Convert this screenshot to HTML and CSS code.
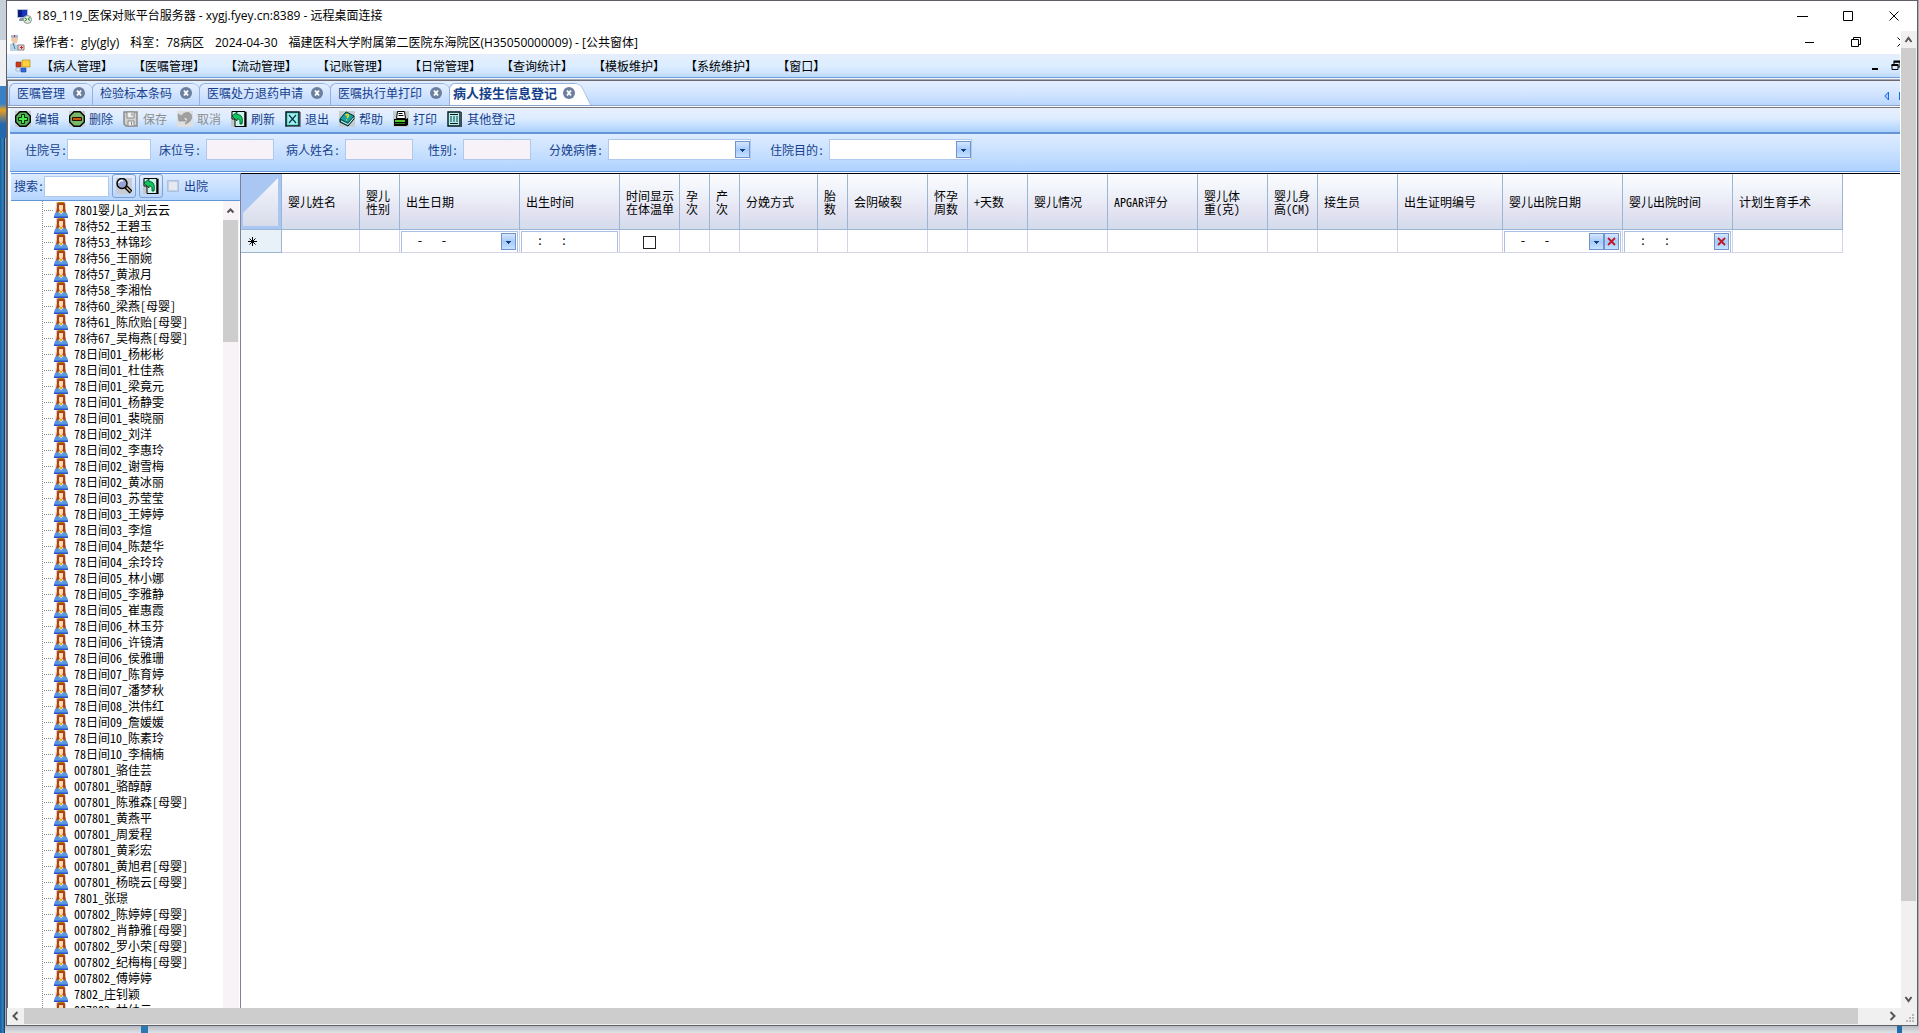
FILE: index.html
```html
<!DOCTYPE html>
<html lang="zh-CN">
<head>
<meta charset="utf-8">
<title>189_119_医保对账平台服务器 - 远程桌面连接</title>
<link rel="stylesheet" href="styles.css">
</head>
<body>
<svg class="sprite" aria-hidden="true">
  <symbol id="person" viewBox="0 0 14 16">
    <path d="M2 0h9l1 3v8H1l1-8z" fill="#d9d2c4"/>
    <path d="M4 0h6l1 2v4l1 5h-2L9 9H5l-1 2H2l1-5V2z" fill="#b0420f"/>
    <path d="M4 0h6v1H4z" fill="#b8860f"/>
    <path d="M5 3h4v4L8 9H6L5 7z" fill="#ffdcb4"/>
    <path d="M6 9h2v2H6z" fill="#e8b400"/>
    <path d="M0 14l1-3 3-1 3 2 3-2 3 1 1 3v2H0z" fill="#5b98e0"/>
    <path d="M0 14.500h14V16H0z" fill="#2a52c8"/>
  </symbol>
  <symbol id="tabx" viewBox="0 0 12 12">
    <circle cx="6" cy="6" r="6" fill="#6b7f9f"/>
    <path d="M4 3.500l4 5M8 3.500l-4 5" stroke="#fff" stroke-width="2"/>
  </symbol>
  <symbol id="arrow" viewBox="0 0 13 15">
    <path d="M4 7h5v1H8v1H7v1H6V9H5V8H4z" fill="#0f3c82"/>
  </symbol>
  <symbol id="redx" viewBox="0 0 13 15">
    <path d="M3 4l7 7M10 4l-7 7" stroke="#c01820" stroke-width="1.800"/>
  </symbol>
  <symbol id="refresh" viewBox="0 0 16 16">
    <path d="M0 0h16v16H0z" fill="#c4c8c8"/>
    <path d="M1 .500h13v15H4V8H1z" fill="#c8f4ec" stroke="#000"/>
    <path d="M14.500 1v15" stroke="#000" stroke-width="2"/>
    <path d="M1 5l5-4v2.500c5 0 6 4 5 9.500H9c0-4 0-5-3-5V10z" fill="#10c860" stroke="#003818" stroke-width=".8"/>
  </symbol>
</svg>

<div class="desktop">
<main class="window">
  <header class="titlebar">
    <svg class="ic" viewBox="0 0 16 16"><path d="M1 1h11v9H1z" fill="#b8c4d4"/><path d="M2 2h9v7H2z" fill="#1836c0"/><path d="M2 2h4v7H2z" fill="#0a1c80"/><path d="M4 10h5v1H4zM3 11h7v2H3z" fill="#8898a8"/><circle cx="11.500" cy="11.500" r="4" fill="#e4e8e4" stroke="#8a9a8a"/><path d="M9 10l2 1.500L9 13M14 9.500l-2 1.500 2 1.500" stroke="#18962c" fill="none"/></svg>
    <h1>189_119_医保对账平台服务器 - xygj.fyey.cn:8389 - 远程桌面连接</h1>
    <div class="controls">
      <button aria-label="最小化"><svg viewBox="0 0 11 11"><path d="M0 5.500h11" stroke="#000"/></svg></button>
      <button aria-label="最大化"><svg viewBox="0 0 11 11"><path d="M.500 .500h9v9h-9z" fill="none" stroke="#000"/></svg></button>
      <button aria-label="关闭"><svg viewBox="0 0 11 11"><path d="M.500 .500l9 9M9.500 .500l-9 9" stroke="#000"/></svg></button>
    </div>
  </header>

  <div class="viewport">
    <div class="session">
      <div class="apptitle">
        <svg class="ic" viewBox="0 0 16 16"><path d="M3 1h5l1 3-1 4H4L2 5z" fill="#f0c8a8"/><path d="M2 0h7v3H2z" fill="#a8bcd0"/><path d="M5 0h1v2H5z" fill="#d02020"/><path d="M1 9l4-1 4 2v6H1z" fill="#b8d4e8"/><path d="M4 8l2 6" stroke="#5a7890"/><path d="M9 10h6v5H9z" fill="#e8e4e4" stroke="#907878"/><path d="M11 12.500h3M12.500 11v3" stroke="#d02020"/></svg>
        <h2><span>操作者：gly(gly)</span><span>科室：78病区</span><span>2024-04-30</span><span>福建医科大学附属第二医院东海院区(H35050000009) - [公共窗体]</span></h2>
        <div class="controls">
          <button aria-label="最小化窗体"><svg viewBox="0 0 11 11"><path d="M0 5.500h9" stroke="#000"/></svg></button>
          <button aria-label="还原窗体"><svg viewBox="0 0 11 11"><path d="M.500 2.500h7v7h-7zM2.500 2.500v-2h7v7h-2" fill="none" stroke="#000"/></svg></button>
          <button aria-label="关闭窗体"><svg viewBox="0 0 11 11"><path d="M.500 .500l9 9M9.500 .500l-9 9" stroke="#000"/></svg></button>
        </div>
      </div>

      <nav class="menubar">
        <svg class="ic" viewBox="0 0 16 16"><path d="M1 4h5v5H1z" fill="#d03818" stroke="#803020" stroke-width=".6"/><path d="M7 2h8v7H7z" fill="#ffd040" stroke="#a87808" stroke-width=".6"/><path d="M1 10h4v3H1z" fill="#e8eef8" stroke="#8898b8" stroke-width=".6"/><path d="M6 10h5v4H6z" fill="#3068e0" stroke="#204890" stroke-width=".6"/></svg>
        <a href="#">【病人管理】</a><a href="#">【医嘱管理】</a><a href="#">【流动管理】</a><a href="#">【记账管理】</a><a href="#">【日常管理】</a><a href="#">【查询统计】</a><a href="#">【模板维护】</a><a href="#">【系统维护】</a><a href="#">【窗口】</a>
        <div class="mdi">
          <button aria-label="最小化子窗口"><svg viewBox="0 0 11 11"><path d="M1 9h6" stroke="#000" stroke-width="2"/></svg></button>
          <button aria-label="还原子窗口"><svg viewBox="0 0 11 11"><path d="M1 5h6v4.500H1zM3 4.500V2h6v5H7" fill="none" stroke="#000"/><path d="M.500 5h7M2.500 1.500h7" stroke="#000" stroke-width="2"/></svg></button>
        </div>
      </nav>

      <div class="frame">
        <div class="tabs">
          <div class="tab"><a href="#">医嘱管理</a><button aria-label="关闭标签"><svg><use href="#tabx"/></svg></button></div>
          <div class="tab"><a href="#">检验标本条码</a><button aria-label="关闭标签"><svg><use href="#tabx"/></svg></button></div>
          <div class="tab"><a href="#">医嘱处方退药申请</a><button aria-label="关闭标签"><svg><use href="#tabx"/></svg></button></div>
          <div class="tab"><a href="#">医嘱执行单打印</a><button aria-label="关闭标签"><svg><use href="#tabx"/></svg></button></div>
          <div class="tab active"><a href="#">病人接生信息登记</a><button aria-label="关闭标签"><svg><use href="#tabx"/></svg></button></div>
          <div class="pager">
            <button aria-label="向左"><svg viewBox="0 0 6 10"><path d="M4.500 1v8L.800 5z" fill="#a8ccff" stroke="#1868e8"/></svg></button>
            <button aria-label="向右"><svg viewBox="0 0 6 10"><path d="M1.500 1v8L5.200 5z" fill="#a8ccff" stroke="#1868e8"/></svg></button>
          </div>
        </div>

        <div class="toolbar">
          <button><svg class="ic" viewBox="0 0 16 16"><path d="M0 0h16v16H0z" fill="#c4ccd0"/><path d="M5 .700h6L15.300 5v6L11 15.300H5L.700 11V5z" fill="#58b058" stroke="#000" stroke-width="1.400"/><path d="M6.500 3.500h3v3h3v3h-3v3h-3v-3h-3v-3h3z" fill="#48e848" stroke="#002800"/></svg>编辑</button>
          <button><svg class="ic" viewBox="0 0 16 16"><path d="M0 0h16v16H0z" fill="#c4ccd0"/><path d="M5 .700h6L15.300 5v6L11 15.300H5L.700 11V5z" fill="#78b868" stroke="#000" stroke-width="1.400"/><path d="M3.500 6.500h9v3h-9z" fill="#c85808" stroke="#281000"/></svg>删除</button>
          <button disabled><svg class="ic" viewBox="0 0 16 16"><path d="M1 1h13v14H3l-2-2z" fill="#d0d0d0" stroke="#8c8c8c" stroke-width="1.500"/><path d="M4 1h7v6H4zM5 10h6v5H5z" fill="#eee" stroke="#8c8c8c"/><path d="M8.500 11v3M9 2v3" stroke="#8c8c8c"/></svg>保存</button>
          <button disabled><svg class="ic" viewBox="0 0 16 16"><path d="M0 0h16v16H0z" fill="#dedede"/><path d="M1 3l1 7h7L6.500 7.500c2-2 5-.500 3.500 2.500l-2 3c5-1 8-6 6-9.500-2-3-7-2.500-9.500 1.500z" fill="#a0a0a0" stroke="#888" stroke-width=".6"/></svg>取消</button>
          <button><svg class="ic"><use href="#refresh"/></svg>刷新</button>
          <button><svg class="ic" viewBox="0 0 16 16"><path d="M1 1h13v14H1z" fill="#70dcdc" stroke="#001818" stroke-width="1.500"/><path d="M3 3h9v10H3z" fill="#a4f0ec"/><path d="M4 4l7 8M11 4l-7 8" stroke="#003c50" stroke-width="1.200"/><path d="M15.500 1v15H2" stroke="#889" fill="none"/></svg>退出</button>
          <button><svg class="ic" viewBox="0 0 16 16"><path d="M0 0h16v16H0z" fill="#c4ccd0"/><path d="M1 8l6-7 8 4v3l-6 7-8-4z" fill="#087878" stroke="#001818"/><path d="M1 8l6-7 8 4-6 7z" fill="#18a0a0" stroke="#003030" stroke-width=".6"/><path d="M2 10l7 3.500 6-7" stroke="#e8f8f8" fill="none"/><path d="M6.500 4.500c2-2 4-.500 2.500 1L8 7M7.500 8.500v1" stroke="#ffe020" stroke-width="1.400" fill="none"/></svg>帮助</button>
          <button><svg class="ic" viewBox="0 0 16 16"><path d="M0 0h16v16H0z" fill="#c4ccd0"/><path d="M4.500 .500h7l1 7h-9z" fill="#fff" stroke="#000"/><path d="M5.500 2.500h4M5.500 4.500h5" stroke="#000"/><path d="M1 8h12l2-1v7l-2 1H1z" fill="#000"/><path d="M2 9h10v2H2z" fill="#58c830"/><path d="M2 12h10v1H2z" fill="#208020"/></svg>打印</button>
          <button><svg class="ic" viewBox="0 0 16 16"><path d="M1 1h12v14H1z" fill="#b8ecec" stroke="#001818" stroke-width="1.400"/><path d="M3 3.500h8M3 12.500h8" stroke="#001818"/><path d="M3 6h2M6 6h2M9 6h2M3 8h2M6 8h2M9 8h2M3 10h2M6 10h2M9 10h2" stroke="#004848"/><path d="M14.500 1v15H2" stroke="#445" fill="none"/></svg>其他登记</button>
        </div>

        <form class="filters">
          <div class="field tight"><label for="f1">住院号:</label><input id="f1" type="text" class="wide"></div>
          <div class="field"><label for="f2">床位号:</label><input id="f2" type="text" readonly></div>
          <div class="field"><label for="f3">病人姓名:</label><input id="f3" type="text" readonly></div>
          <div class="field"><label for="f4">性别:</label><input id="f4" type="text" readonly></div>
          <div class="field"><label for="f5">分娩病情:</label><span class="combo"><select id="f5"><option></option></select><svg class="drop"><use href="#arrow"/></svg></span></div>
          <div class="field"><label for="f6">住院目的:</label><span class="combo"><select id="f6"><option></option></select><svg class="drop"><use href="#arrow"/></svg></span></div>
        </form>

        <div class="content">
          <aside class="sidebar">
            <form class="search">
              <label for="q">搜索:</label><input id="q" type="text">
              <button type="button" aria-label="查找"><svg class="ic" viewBox="0 0 16 16"><path d="M0 0h16v16H0z" fill="#c8ccd4"/><path d="M10 9l5 5" stroke="#000" stroke-width="4"/><path d="M10.500 9.500l4 4" stroke="#d8b890" stroke-width="1.500"/><circle cx="6" cy="5.500" r="5" fill="#98a4d0" stroke="#000" stroke-width="1.400"/><path d="M3 5c0-2 2-3 4-2" stroke="#fff" stroke-width="1.500" fill="none"/></svg></button>
              <button type="button" aria-label="刷新列表"><svg class="ic"><use href="#refresh"/></svg></button>
              <input id="out" type="checkbox"><label for="out">出院</label>
            </form>
            <div class="treebox">
              <ul class="tree">
                <li><svg><use href="#person"/></svg>7801婴儿a_刘云云</li>
                <li><svg><use href="#person"/></svg>78待52_王碧玉</li>
                <li><svg><use href="#person"/></svg>78待53_林锦珍</li>
                <li><svg><use href="#person"/></svg>78待56_王丽婉</li>
                <li><svg><use href="#person"/></svg>78待57_黄淑月</li>
                <li><svg><use href="#person"/></svg>78待58_李湘怡</li>
                <li><svg><use href="#person"/></svg>78待60_梁燕[母婴]</li>
                <li><svg><use href="#person"/></svg>78待61_陈欣贻[母婴]</li>
                <li><svg><use href="#person"/></svg>78待67_吴梅燕[母婴]</li>
                <li><svg><use href="#person"/></svg>78日间01_杨彬彬</li>
                <li><svg><use href="#person"/></svg>78日间01_杜佳燕</li>
                <li><svg><use href="#person"/></svg>78日间01_梁竟元</li>
                <li><svg><use href="#person"/></svg>78日间01_杨静雯</li>
                <li><svg><use href="#person"/></svg>78日间01_裴晓丽</li>
                <li><svg><use href="#person"/></svg>78日间02_刘洋</li>
                <li><svg><use href="#person"/></svg>78日间02_李惠玲</li>
                <li><svg><use href="#person"/></svg>78日间02_谢雪梅</li>
                <li><svg><use href="#person"/></svg>78日间02_黄冰丽</li>
                <li><svg><use href="#person"/></svg>78日间03_苏莹莹</li>
                <li><svg><use href="#person"/></svg>78日间03_王婷婷</li>
                <li><svg><use href="#person"/></svg>78日间03_李煊</li>
                <li><svg><use href="#person"/></svg>78日间04_陈楚华</li>
                <li><svg><use href="#person"/></svg>78日间04_余玲玲</li>
                <li><svg><use href="#person"/></svg>78日间05_林小娜</li>
                <li><svg><use href="#person"/></svg>78日间05_李雅静</li>
                <li><svg><use href="#person"/></svg>78日间05_崔惠霞</li>
                <li><svg><use href="#person"/></svg>78日间06_林玉芬</li>
                <li><svg><use href="#person"/></svg>78日间06_许镜清</li>
                <li><svg><use href="#person"/></svg>78日间06_侯雅珊</li>
                <li><svg><use href="#person"/></svg>78日间07_陈育婷</li>
                <li><svg><use href="#person"/></svg>78日间07_潘梦秋</li>
                <li><svg><use href="#person"/></svg>78日间08_洪伟红</li>
                <li><svg><use href="#person"/></svg>78日间09_詹媛媛</li>
                <li><svg><use href="#person"/></svg>78日间10_陈素玲</li>
                <li><svg><use href="#person"/></svg>78日间10_李楠楠</li>
                <li><svg><use href="#person"/></svg>007801_骆佳芸</li>
                <li><svg><use href="#person"/></svg>007801_骆醇醇</li>
                <li><svg><use href="#person"/></svg>007801_陈雅森[母婴]</li>
                <li><svg><use href="#person"/></svg>007801_黄燕平</li>
                <li><svg><use href="#person"/></svg>007801_周爱程</li>
                <li><svg><use href="#person"/></svg>007801_黄彩宏</li>
                <li><svg><use href="#person"/></svg>007801_黄旭君[母婴]</li>
                <li><svg><use href="#person"/></svg>007801_杨晓云[母婴]</li>
                <li><svg><use href="#person"/></svg>7801_张璟</li>
                <li><svg><use href="#person"/></svg>007802_陈婷婷[母婴]</li>
                <li><svg><use href="#person"/></svg>007802_肖静雅[母婴]</li>
                <li><svg><use href="#person"/></svg>007802_罗小荣[母婴]</li>
                <li><svg><use href="#person"/></svg>007802_纪梅梅[母婴]</li>
                <li><svg><use href="#person"/></svg>007802_傅婷婷</li>
                <li><svg><use href="#person"/></svg>7802_庄钊颖</li>
                <li><svg><use href="#person"/></svg>007802_林幼云</li>
              </ul>
              <div class="treescroll"><svg viewBox="0 0 15 19"><path d="M4.500 11.500l3-3 3 3" fill="none" stroke="#555" stroke-width="2"/></svg><i></i></div>
            </div>
          </aside>

          <section class="gridbox">
            <table class="grid">
              <colgroup><col class="w41"><col class="w78"><col class="w40"><col class="w120"><col class="w100"><col class="w60"><col class="w30"><col class="w30"><col class="w78"><col class="w30"><col class="w80"><col class="w40"><col class="w60"><col class="w80"><col class="w90"><col class="w70"><col class="w50"><col class="w80"><col class="w105"><col class="w120"><col class="w110"><col class="w110"></colgroup>
              <thead><tr>
                <th class="corner"><svg viewBox="0 0 40 55" preserveAspectRatio="none"><path d="M0 0h40v55H0z" fill="#a9c7f2"/><path d="M37 4v48H2V39z" fill="url(#cg)"/><defs><linearGradient id="cg" x2="0" y2="1"><stop stop-color="#f4f7fd"/><stop offset="1" stop-color="#d8dcea"/></linearGradient></defs></svg></th>
                <th>婴儿姓名</th><th>婴儿<br>性别</th><th>出生日期</th><th>出生时间</th><th>时间显示<br>在体温单</th><th>孕<br>次</th><th>产<br>次</th><th>分娩方式</th><th>胎<br>数</th><th>会阴破裂</th><th>怀孕<br>周数</th><th>+天数</th><th>婴儿情况</th><th>APGAR评分</th><th>婴儿体<br>重(克)</th><th>婴儿身<br>高(CM)</th><th>接生员</th><th>出生证明编号</th><th>婴儿出院日期</th><th>婴儿出院时间</th><th>计划生育手术</th>
              </tr></thead>
              <tbody><tr>
                <td class="rowhead"><svg viewBox="0 0 9 9"><path d="M4.500 0v9M0 4.500h9M1.500 1.500l6 6M7.500 1.500l-6 6" stroke="#000"/></svg></td>
                <td></td><td></td>
                <td><div class="editor"><input type="text" value="-   -" aria-label="出生日期"><button aria-label="选择日期"><svg><use href="#arrow"/></svg></button></div></td>
                <td><div class="editor"><input type="text" value=":   :" aria-label="出生时间"></div></td>
                <td class="check"><input type="checkbox" aria-label="时间显示在体温单"></td>
                <td></td><td></td><td></td><td></td><td></td><td></td><td></td><td></td><td></td><td></td><td></td><td></td><td></td>
                <td><div class="editor"><input type="text" value="-   -" aria-label="婴儿出院日期"><button aria-label="选择出院日期"><svg><use href="#arrow"/></svg></button><button aria-label="清除日期"><svg><use href="#redx"/></svg></button></div></td>
                <td><div class="editor"><input type="text" value=":   :" aria-label="婴儿出院时间"><button aria-label="清除时间"><svg><use href="#redx"/></svg></button></div></td>
                <td></td>
              </tr></tbody>
            </table>
          </section>
        </div>
      </div>
    </div>

    <div class="vscroll"><svg viewBox="0 0 15 17"><path d="M4.500 11l3-4 3 4" fill="none" stroke="#555" stroke-width="2"/></svg><i></i><svg viewBox="0 0 15 17"><path d="M4.500 6l3 4 3-4" fill="none" stroke="#555" stroke-width="2"/></svg></div>
    <div class="hscroll"><svg viewBox="0 0 17 17"><path d="M10.500 4l-4 4 4 4" fill="none" stroke="#555" stroke-width="2"/></svg><i></i><svg viewBox="0 0 17 17"><path d="M6.500 4l4 4-4 4" fill="none" stroke="#555" stroke-width="2"/></svg></div>
    <svg class="grip" viewBox="0 0 16 17"><path d="M11 6h2v2h-2zM8 9h2v2H8zM11 9h2v2h-2zM5 12h2v2H5zM8 12h2v2H8zM11 12h2v2h-2z" fill="#b8b8b8"/></svg>
  </div>
</main>
</div>
</body>
</html>
```

FILE: styles.css
```css
* { box-sizing: border-box; }

body {
  margin: 0;
  font: 12px/16px "Noto Sans CJK SC", sans-serif;
  font-feature-settings: "hwid";
  color: #000;
}

button, input, select { font: inherit; font-feature-settings: inherit; color: inherit; margin: 0; padding: 0; }
button { border: 0; background: none; }
a { color: inherit; text-decoration: none; }
svg { display: block; flex: none; }
.sprite { position: absolute; width: 0; height: 0; }
.ic { width: 16px; height: 16px; }

/* Desktop visible round the window */
.desktop {
  height: 100vh;
  padding: 0 1px 7px 6px;
  overflow: hidden;
  background:
    linear-gradient(#2a78b4, #2a78b4) 141px 100% / 7px 7px no-repeat,
    linear-gradient(#1c6cae, #1c6cae) 1897px 100% / 5px 7px no-repeat,
    linear-gradient(90deg, #1b5c96, #2f86c8 60%, #0c2c50) 0 138px / 5px 100% no-repeat,
    linear-gradient(#c8d0da 0 40px, #eef0f2 40px 86px, #3a80c4 86px 104px, #e8a020 110px, #2468b0 124px 138px, transparent 138px) 0 0 / 6px 100% no-repeat,
    linear-gradient(#b8bcc2, #dfe3e8) 0 100% / 100% 7px no-repeat,
    #a8aeb6;
}

.window {
  height: 100%;
  display: flex;
  flex-direction: column;
  border: 1px solid #5f5f68;
  background: #fff;
}

.titlebar, .apptitle {
  display: flex;
  align-items: center;
  font-family: "Open Sans", "Noto Sans CJK SC", sans-serif;
  font-feature-settings: normal;
}
.titlebar { height: 30px; flex: none; padding-left: 9px; gap: 4px; }
h1, h2 { margin: 0; font-size: 12px; font-weight: 400; white-space: nowrap; }
h2 { display: flex; gap: 11px; }
.controls { margin-left: auto; display: flex; gap: 35px; }
.controls button, .controls svg { width: 11px; height: 11px; }
.titlebar .controls { padding-right: 17px; }

.viewport {
  flex: 1;
  min-height: 0;
  display: grid;
  grid-template: minmax(0, 1fr) 17px / minmax(0, 1fr) 16px;
  background: #f0f0f0;
}
.session {
  display: flex;
  flex-direction: column;
  overflow: hidden;
  background: #fff;
  border-right: 1px solid #fff;
}
.apptitle { height: 23px; flex: none; padding-left: 2px; gap: 8px; margin-right: -8px; }

.menubar {
  height: 27px;
  flex: none;
  display: flex;
  align-items: center;
  padding: 0 0 4px 8px;
  background:
    linear-gradient(#6f9fd8 0 1px, #eef4fc 1px 2px, #a8a8b0 2px 3px, #6c6870 3px) 0 100% / 100% 4px no-repeat,
    linear-gradient(#e6eefd, #dceeff 40%, #cfe4ff 70%, #a9cfff);
}
.menubar a { padding: 0 10px; white-space: nowrap; }
.mdi { margin-left: auto; display: flex; gap: 9px; margin-right: -2px; }
.mdi button, .mdi svg { width: 11px; height: 11px; }

.frame {
  flex: 1;
  min-height: 0;
  display: flex;
  flex-direction: column;
  border-left: 1px solid #6c6870;
  color: #153f8c;
}

.tabs {
  height: 27px;
  flex: none;
  display: flex;
  padding: 2px 0 3px 1px;
  background:
    linear-gradient(#8ba4cc 0 1px, #fff 1px 2px, #75757f 2px) 0 100% / 100% 3px no-repeat,
    linear-gradient(#e3efff, #cfe2ff 55%, #b2d2ff);
}
.tab {
  position: relative;
  display: flex;
  align-items: center;
  gap: 8px;
  height: 22px;
  padding: 0 7px 2px 8px;
  isolation: isolate;
}
.tab::before, .tab::after {
  content: "";
  position: absolute;
  z-index: -1;
  top: 0;
  bottom: 0;
  border: 1px solid #93b2e0;
  border-bottom: 0;
  background: linear-gradient(#e4efff, #bed8ff);
}
.tab::before { left: 0; right: 10px; border-right: 0; border-radius: 6px 0 0 0; }
.tab::after { right: -4px; width: 24px; border-left: 0; border-radius: 0 6px 0 0; transform: skewX(26deg); }
.tab button, .tab button svg { width: 12px; height: 12px; }
.active { font-size: 13px; font-weight: 700; padding-left: 4px; gap: 6px; }
.active::before, .active::after { background: #fff; }
.pager { margin: 4px -4px 0 auto; display: flex; gap: 8px; }
.pager svg { width: 6px; height: 10px; }

.toolbar {
  height: 26px;
  flex: none;
  display: flex;
  align-items: center;
  gap: 10px;
  margin-left: 2px;
  padding: 0 0 2px 5px;
  border-bottom: 2px solid #6395d8;
  background: linear-gradient(#e8effd, #dcecff 45%, #abd0ff);
}
.toolbar button { display: flex; align-items: center; gap: 4px; white-space: nowrap; }
.toolbar button:disabled { color: #8d8d8d; }

.filters {
  height: 38px;
  flex: none;
  display: grid;
  grid-template-columns: 134px 127px 142px 121px 221px 1fr;
  align-items: start;
  margin-left: 2px;
  padding: 5px 0 0 15px;
  border-bottom: 1px solid #5f93dc;
  background: linear-gradient(#deecff, #c6dfff 55%, #afd2ff);
}
.field { display: flex; align-items: center; gap: 5px; white-space: nowrap; }
.tight { gap: 0; }
.field input, .field select { height: 21px; width: 68px; border: 1px solid #b0c8ee; background: #fff; border-radius: 0; }
.field input[readonly] { background: #f6f2f7; }
.field .wide { width: 84px; }
.combo { position: relative; display: block; }
.field select { display: block; width: 143px; appearance: none; }
.drop { position: absolute; right: 1px; top: 2px; pointer-events: none; }
.drop, .editor button {
  width: 15px;
  height: 17px;
  border: 1px solid #6f95cc;
  background: linear-gradient(#d4e6ff, #a6cbfa 50%, #c6e0ff);
}

.content { flex: 1; min-height: 0; display: flex; margin-left: 3px; padding-top: 1px; }

.sidebar {
  width: 230px;
  flex: none;
  display: flex;
  flex-direction: column;
  border-right: 1px solid #808098;
}
.search {
  height: 28px;
  flex: none;
  display: flex;
  align-items: center;
  padding: 0 0 2px 3px;
  border-top: 1px solid #6395d8;
  border-bottom: 1px solid #6395d8;
  background: linear-gradient(#dcebff, #b5d5ff);
}
.search input[type="text"] { width: 65px; height: 21px; border: 1px solid #b0c8ee; margin-right: 3px; }
.search button { width: 24px; height: 24px; display: flex; align-items: center; justify-content: center; border: 1px solid #7e9fd0; border-radius: 3px; margin-right: 3px; background: linear-gradient(#e4efff, #b8d5fc); }
.search input[type="checkbox"] { appearance: none; width: 12px; height: 12px; margin: 0 5px 0 1px; border: 2px solid #c4cede; background: #e6eaf0; outline: 1px solid #a9c2e6; outline-offset: -1px; }

.treebox { flex: 1; min-height: 0; display: flex; overflow: hidden; background: #fff; }
.tree {
  flex: 1;
  list-style: none;
  margin: 0 0 0 31px;
  padding: 1px 0 0;
  color: #000;
  background: repeating-linear-gradient(#888 0 1px, transparent 1px 2px) 0 0 / 1px 100% no-repeat;
}
.tree li {
  display: flex;
  align-items: center;
  gap: 6px;
  height: 16px;
  padding-left: 12px;
  white-space: nowrap;
  background: repeating-linear-gradient(90deg, #888 0 1px, transparent 1px 2px) 2px 8px / 9px 1px no-repeat;
}
.tree svg { width: 14px; height: 16px; }
.treescroll { width: 17px; flex: none; padding-right: 1px; background: #f7f3f7; border-right: 1px solid #fff; }
.treescroll svg { width: 15px; height: 19px; }
.treescroll i { display: block; height: 20%; max-height: 122px; background: #cdcdcd; }

.gridbox { flex: 1; min-width: 0; overflow: hidden; background: #fff; border-top: 1px solid #000; }
.grid { table-layout: fixed; border-collapse: separate; border-spacing: 0; width: 1602px; color: #000; }
.w30 { width: 30px; } .w40 { width: 40px; } .w41 { width: 41px; } .w50 { width: 50px; }
.w60 { width: 60px; } .w70 { width: 70px; } .w78 { width: 78px; } .w80 { width: 80px; }
.w90 { width: 90px; } .w100 { width: 100px; } .w105 { width: 105px; } .w110 { width: 110px; } .w120 { width: 120px; }
.grid th {
  height: 56px;
  padding: 0 0 0 6px;
  font-weight: 400;
  line-height: 13px;
  text-align: left;
  white-space: nowrap;
  border-right: 1px solid #9ab6d2;
  border-bottom: 1px solid #9ab6d2;
  background: linear-gradient(#fbfcff, #edf0f8 40%, #e4e3f2 68%, #d3dbec);
}
.grid .corner { padding: 0; }
.corner svg { width: 40px; height: 55px; }
.grid td {
  height: 23px;
  padding: 0 1px;
  border-right: 1px solid #d4d4e6;
  border-bottom: 1px solid #d4d4e6;
}
.grid .rowhead { padding-left: 7px; background: #e8f0f8; border-color: #9ab6d2; }
.rowhead svg { width: 9px; height: 9px; }
.editor { display: flex; height: 21px; padding: 0 1px 0 15px; border: 1px solid #a9bfe6; border-bottom: 0; }
.editor input { flex: 1; min-width: 0; height: 16px; border: 0; background: none; }
.editor button { flex: none; margin-top: 1px; }
.drop { overflow: hidden; }
.editor svg { width: 13px; height: 15px; }
.grid .check { text-align: center; padding: 0; }
.check input { appearance: none; display: inline-block; vertical-align: middle; width: 13px; height: 13px; border: 1px solid #222; background: #fff; }

.vscroll { display: flex; flex-direction: column; padding-right: 1px; }
.vscroll svg { width: 15px; height: 17px; }
.vscroll i { flex: 0 1 853px; background: #cdcdcd; margin-bottom: auto; }
.hscroll { display: flex; }
.hscroll svg { width: 17px; height: 17px; }
.hscroll i { flex: 1; margin: 0 26px 1px 0; background: #cdcdcd; }
.grip { width: 16px; height: 17px; }
```
